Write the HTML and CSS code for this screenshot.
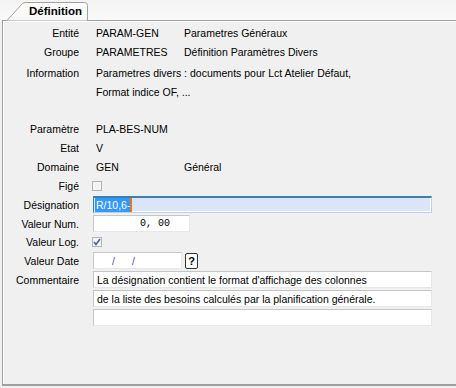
FILE: index.html
```html
<!DOCTYPE html>
<html lang="fr">
<head>
    <meta charset="UTF-8">
    <title>Définition</title>
    <link rel="stylesheet" href="styles.css">
</head>
<body>

    <!-- Onglets -->
    <div class="tabs">
        <div class="tab">
            <svg class="tab-shape" width="90" height="21" viewBox="0 0 90 21">
                <defs>
                    <linearGradient id="tabGrad" x1="0" y1="0" x2="0" y2="1">
                        <stop offset="0" stop-color="#ffffff"/>
                        <stop offset="1" stop-color="#f6f6f6"/>
                    </linearGradient>
                </defs>
                <path d="M6.5 21 L22.5 3.5 Q24 2.5 26 2.5 L84.5 2.5 Q87.5 2.5 87.5 5.5 L87.5 21 Z" fill="url(#tabGrad)" stroke="#a0a0a0"/>
            </svg>
            <span class="tab-label">Définition</span>
        </div>
    </div>

    <!-- Panneau -->
    <div class="panel">
        <div class="row">
            <span class="lbl">Entité</span>
            <span class="val">PARAM-GEN</span>
            <span class="val3">Parametres Généraux</span>
        </div>
        <div class="row">
            <span class="lbl">Groupe</span>
            <span class="val">PARAMETRES</span>
            <span class="val3">Définition Paramètres Divers</span>
        </div>
        <div class="row row-info">
            <span class="lbl">Information</span>
            <span class="val-long">Parametres divers : documents pour Lct Atelier Défaut,</span>
        </div>
        <div class="row">
            <span class="lbl"></span>
            <span class="val-long">Format indice OF, ...</span>
        </div>

        <div class="row row-sep">
            <span class="lbl">Paramètre</span>
            <span class="val">PLA-BES-NUM</span>
        </div>
        <div class="row">
            <span class="lbl">Etat</span>
            <span class="val">V</span>
        </div>
        <div class="row">
            <span class="lbl">Domaine</span>
            <span class="val">GEN</span>
            <span class="val3">Général</span>
        </div>
        <div class="row">
            <span class="lbl">Figé</span>
            <span class="check"></span>
        </div>
        <div class="row">
            <span class="lbl">Désignation</span>
            <span class="field field-wide field-focus"><span class="selected">R/10,6-</span><span class="caret"></span></span>
        </div>
        <div class="row">
            <span class="lbl">Valeur Num.</span>
            <span class="field field-num">0, 00</span>
        </div>
        <div class="row row-log">
            <span class="lbl">Valeur Log.</span>
            <span class="check checked">
                <svg width="8" height="8" viewBox="0 0 8 8"><path d="M1 4 L3 6.5 L7 1" fill="none" stroke="#4a5fa8" stroke-width="1.6"/></svg>
            </span>
        </div>
        <div class="row">
            <span class="lbl">Valeur Date</span>
            <span class="field field-date"><span class="slash">/</span><span class="slash">/</span></span>
            <span class="help">?</span>
        </div>
        <div class="row">
            <span class="lbl">Commentaire</span>
            <span class="field field-wide">La désignation contient le format d'affichage des colonnes</span>
        </div>
        <div class="row">
            <span class="lbl"></span>
            <span class="field field-wide">de la liste des besoins calculés par la planification générale.</span>
        </div>
        <div class="row">
            <span class="lbl"></span>
            <span class="field field-wide"></span>
        </div>
    </div>

</body>
</html>
```

FILE: styles.css
```css
body {
    margin: 0;
    width: 456px;
    height: 388px;
    overflow: hidden;
    background-color: #f0f0f0;
    font-family: 'Liberation Sans', Arial, sans-serif;
    font-size: 10.5px;
    color: #000;
}

/* Onglets */
.tabs {
    height: 20px;
    background: linear-gradient(#f4f4f4, #f9f9f9);
}

.tab {
    position: relative;
    width: 90px;
    height: 20px;
}

.tab-shape {
    position: absolute;
    left: 0;
    top: 0;
}

.tab-label {
    position: relative;
    display: block;
    padding: 4px 0 0 29px;
    font-size: 11.5px;
    font-weight: bold;
    line-height: 14px;
}

/* Panneau */
.panel {
    margin-left: 2px;
    width: 454px;
    height: 366px;
    box-sizing: border-box;
    border-top: 1px solid #a0a0a0;
    border-left: 1px solid #a0a0a0;
    border-bottom: 2px solid #a0a0a0;
    box-shadow: inset 1px 1px 0 #ffffff;
    padding-top: 2px;
}

.row {
    display: flex;
    align-items: center;
    height: 19px;
    white-space: nowrap;
}

.row-info {
    margin-top: 2px;
}

.row-sep {
    margin-top: 18px;
}

.row-log {
    height: 18px;
}

.lbl {
    width: 76px;
    text-align: right;
    flex-shrink: 0;
}

.val {
    margin-left: 17px;
    width: 88px;
}

.val3 {
    flex-shrink: 0;
}

.val-long {
    margin-left: 17px;
}

/* Cases à cocher */
.check {
    display: flex;
    align-items: center;
    justify-content: center;
    margin-left: 13px;
    width: 8px;
    height: 8px;
    border: 1px solid #b4b4b4;
    background-color: #f4f4f4;
}

.checked {
    border-color: #b0b4bc;
}

/* Champs de saisie */
.field {
    display: flex;
    align-items: center;
    box-sizing: border-box;
    height: 17px;
    margin-left: 14px;
    padding-left: 3px;
    background-color: #fff;
    border: 1px solid;
    border-color: #c6c6c6 #e4e8ec #e4e8ec #c6c6c6;
    overflow: hidden;
}

.field-wide {
    width: 339px;
}

.field-focus {
    padding-left: 1px;
    background-color: #dbe5fa;
    border-color: #3c7fb1 #b5d2ea #b5d2ea #3c7fb1;
    border-top-width: 2px;
    box-shadow: inset 0 -1px 0 #fff, inset -1px 0 0 #fff;
}

.selected {
    background-color: #3399ff;
    color: #fff;
    padding: 1px 0 1px 1px;
    line-height: 12px;
}

.caret {
    width: 2px;
    height: 14px;
    background-color: #e07a1c;
}

.field-num {
    width: 97px;
    justify-content: flex-end;
    padding-right: 19px;
    font-family: 'Liberation Mono', monospace;
    font-size: 10px;
}

.field-date {
    width: 89px;
    padding-left: 18px;
}

.slash {
    width: 20px;
    color: #6a3fb0;
}

.help {
    margin-left: 3px;
    width: 13px;
    height: 16px;
    box-sizing: border-box;
    border: 1px solid #333;
    border-radius: 2px;
    background-color: #fff;
    font-weight: bold;
    font-size: 11px;
    text-align: center;
    line-height: 14px;
}
```
